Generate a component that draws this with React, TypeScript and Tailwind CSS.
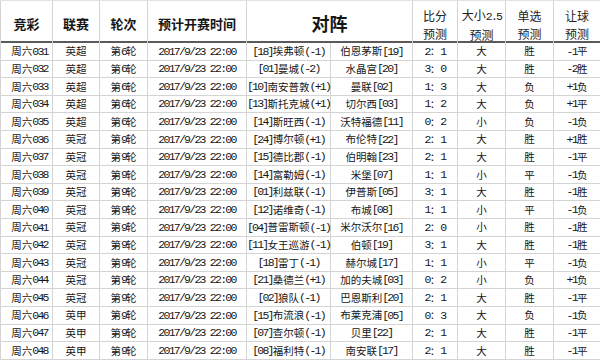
import React from "react";

type Row = {
  id: string;
  league: string;
  round: string;
  home: string;
  away: string;
  score: string;
  ou: string;
  pick: string;
  hcp: string;
};

const rows: Row[] = [
  { id: "031", league: "英超", round: "第6轮", home: "[18]埃弗顿(-1)", away: "伯恩茅斯[19]", score: "2：1", ou: "大", pick: "胜", hcp: "-1平" },
  { id: "032", league: "英超", round: "第6轮", home: "[01]曼城(-2)", away: "水晶宫[20]", score: "3：0", ou: "大", pick: "胜", hcp: "-2胜" },
  { id: "033", league: "英超", round: "第6轮", home: "[10]南安普敦(+1)", away: "曼联[02]", score: "1：3", ou: "大", pick: "负", hcp: "+1负" },
  { id: "034", league: "英超", round: "第6轮", home: "[13]斯托克城(+1)", away: "切尔西[03]", score: "1：2", ou: "大", pick: "负", hcp: "+1平" },
  { id: "035", league: "英超", round: "第6轮", home: "[14]斯旺西(-1)", away: "沃特福德[11]", score: "0：2", ou: "小", pick: "负", hcp: "-1负" },
  { id: "036", league: "英冠", round: "第9轮", home: "[24]博尔顿(+1)", away: "布伦特[22]", score: "2：1", ou: "大", pick: "胜", hcp: "+1胜" },
  { id: "037", league: "英冠", round: "第9轮", home: "[15]德比郡(-1)", away: "伯明翰[23]", score: "2：1", ou: "大", pick: "胜", hcp: "-1平" },
  { id: "038", league: "英冠", round: "第9轮", home: "[14]富勒姆(-1)", away: "米堡[07]", score: "1：1", ou: "小", pick: "平", hcp: "-1负" },
  { id: "039", league: "英冠", round: "第9轮", home: "[01]利兹联(-1)", away: "伊普斯[05]", score: "3：1", ou: "大", pick: "胜", hcp: "-1胜" },
  { id: "040", league: "英冠", round: "第9轮", home: "[12]诺维奇(-1)", away: "布城[08]", score: "1：1", ou: "小", pick: "平", hcp: "-1负" },
  { id: "041", league: "英冠", round: "第9轮", home: "[04]普雷斯顿(-1)", away: "米尔沃尔[16]", score: "2：0", ou: "小", pick: "胜", hcp: "-1胜" },
  { id: "042", league: "英冠", round: "第9轮", home: "[11]女王巡游(-1)", away: "伯顿[19]", score: "3：1", ou: "大", pick: "胜", hcp: "-1胜" },
  { id: "043", league: "英冠", round: "第9轮", home: "[18]雷丁(-1)", away: "赫尔城[17]", score: "1：1", ou: "小", pick: "平", hcp: "-1负" },
  { id: "044", league: "英冠", round: "第9轮", home: "[21]桑德兰(+1)", away: "加的夫城[03]", score: "0：2", ou: "小", pick: "负", hcp: "+1负" },
  { id: "045", league: "英冠", round: "第9轮", home: "[02]狼队(-1)", away: "巴恩斯利[20]", score: "2：1", ou: "大", pick: "胜", hcp: "-1平" },
  { id: "046", league: "英甲", round: "第9轮", home: "[15]布流浪(-1)", away: "布莱克浦[05]", score: "0：3", ou: "大", pick: "负", hcp: "-1负" },
  { id: "047", league: "英甲", round: "第9轮", home: "[07]查尔顿(-1)", away: "贝里[22]", score: "2：1", ou: "大", pick: "胜", hcp: "-1平" },
  { id: "048", league: "英甲", round: "第9轮", home: "[08]福利特(-1)", away: "南安联[17]", score: "2：1", ou: "大", pick: "胜", hcp: "-1平" },
];

// latin runs get a narrow mono look, like the half-width digits in the sheet
function Mixed({ text }: { text: string }) {
  const parts = text.split(/([\x20-\x7E]+)/).filter(Boolean);
  return (
    <>
      {parts.map((p, i) =>
        /^[\x20-\x7E]+$/.test(p) ? (
          <span
            key={i}
            className="whitespace-pre font-['Liberation_Mono',monospace] text-[11.5px] tracking-[-1.75px]"
          >
            {p}
          </span>
        ) : (
          <span key={i}>{p}</span>
        )
      )}
    </>
  );
}

const cell =
  "flex h-[17.6px] items-center justify-center border-b border-r border-[#d4d4d4] whitespace-nowrap";

function HeadPair({ top, last = false }: { top: string; last?: boolean }) {
  return (
    <div
      className={`flex flex-col items-center justify-center pt-[5px] text-[12px] leading-[18px] text-[#222] ${
        last ? "" : "border-r border-[#d4d4d4]"
      }`}
    >
      <span>
        <Mixed text={top} />
      </span>
      <span>预测</span>
    </div>
  );
}

export default function App() {
  return (
    <div className="h-[360px] w-[600px] overflow-hidden bg-white font-['Noto_Sans_CJK_SC',sans-serif] text-[10.5px] text-[#161616]">
      <div className="grid grid-cols-[53px_47px_48px_99px_84px_82px_45px_48px_48px_46px]">
        {/* header */}
        <div className="col-span-10 grid h-[43px] grid-cols-[53px_47px_48px_99px_166px_45px_48px_48px_46px] border-b-2 border-t border-b-[#5a5a5a] border-t-[#e2e2e2]">
          <div className="flex items-center justify-center border-l border-r border-[#d4d4d4] pt-[3px] text-[13px] font-bold">
            竞彩
          </div>
          <div className="flex items-center justify-center border-r border-[#d4d4d4] pt-[3px] text-[13px] font-bold">
            联赛
          </div>
          <div className="flex items-center justify-center border-r border-[#d4d4d4] pt-[3px] text-[13px] font-bold">
            轮次
          </div>
          <div className="flex items-center justify-center border-r border-[#d4d4d4] pt-[3px] text-[13px] font-bold">
            预计开赛时间
          </div>
          <div className="flex items-center justify-center border-r border-[#d4d4d4] pt-[1px] text-[18px] font-bold">
            对阵
          </div>
          <HeadPair top="比分" />
          <HeadPair top="大小2.5" />
          <HeadPair top="单选" />
          <HeadPair top="让球" last />
        </div>

        {/* data rows */}
        {rows.map((r) => (
          <React.Fragment key={r.id}>
            <div className={`${cell} border-l pl-[6px]`}>
              <Mixed text={`周六${r.id}`} />
            </div>
            <div className={cell}>{r.league}</div>
            <div className={cell}>
              <Mixed text={r.round} />
            </div>
            <div className={cell}>
              <Mixed text="2017/9/23 22:00" />
            </div>
            <div className={cell}>
              <Mixed text={r.home} />
            </div>
            <div className={cell}>
              <Mixed text={r.away} />
            </div>
            <div className={cell}>
              <Mixed text={r.score} />
            </div>
            <div className={cell}>{r.ou}</div>
            <div className={cell}>{r.pick}</div>
            <div className={`${cell} border-r-0`}>
              <Mixed text={r.hcp} />
            </div>
          </React.Fragment>
        ))}
      </div>
    </div>
  );
}
